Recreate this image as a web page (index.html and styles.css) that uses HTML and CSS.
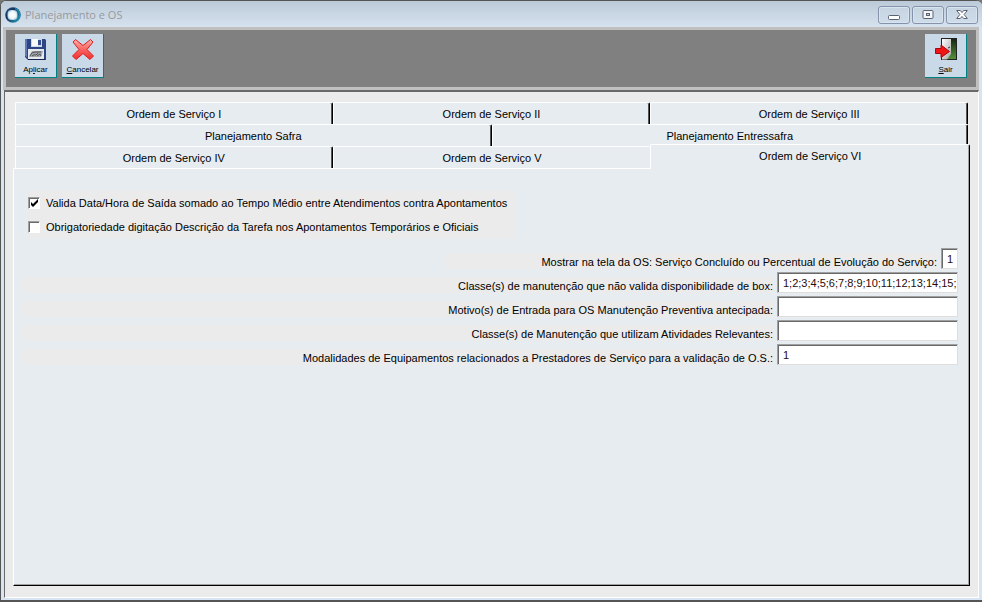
FILE: index.html
```html
<!DOCTYPE html>
<html lang="pt-BR">
<head>
  <meta charset="UTF-8">
  <meta name="viewport" content="width=device-width, initial-scale=1.0">
  <title>Planejamento e OS</title>
  <link rel="stylesheet" href="styles.css">
</head>
<body>
  <div class="window">

    <!-- Barra de título -->
    <header class="titlebar">
      <svg class="app-icon" viewBox="0 0 16 16" aria-hidden="true">
        <defs>
          <linearGradient id="ring" x1="0" y1="0" x2="1" y2="1">
            <stop offset="0" stop-color="#2a5a80"/>
            <stop offset="0.4" stop-color="#102c5c"/>
            <stop offset="1" stop-color="#2fb4cc"/>
          </linearGradient>
          <radialGradient id="core">
            <stop offset="0" stop-color="#ffffff"/>
            <stop offset="0.7" stop-color="#eef6fa"/>
            <stop offset="1" stop-color="#a9cddd"/>
          </radialGradient>
        </defs>
        <circle cx="8" cy="8" r="7.800" fill="url(#ring)"/>
        <path d="M10 1.500a6.500 6.500 0 0 1 4 9" fill="none" stroke="#1a8bab" stroke-width="1.500"/>
        <rect x="2.500" y="3" width="10" height="10" rx="4" fill="url(#core)"/>
      </svg>
      <h1>Planejamento e OS</h1>
      <div class="window-buttons">
        <button type="button" aria-label="Minimizar">
          <svg viewBox="0 0 12 12"><rect x=".5" y="6.500" width="11" height="4" rx="1" fill="#fff" stroke="#5c6273"/></svg>
        </button>
        <button type="button" aria-label="Maximizar">
          <svg viewBox="0 0 12 12"><rect x="1" y="1.500" width="10" height="8" rx="1" fill="#f3f5f8" stroke="#5c6273"/><rect x="4.500" y="4.500" width="3" height="2" fill="#c3d0dd" stroke="#5c6273"/></svg>
        </button>
        <button type="button" aria-label="Fechar">
          <svg viewBox="0 0 12 12"><path d="M.7 1.500h3.600L6 3.600l1.700-2.100h3.600L8.100 5.500l3.200 4H7.700L6 7.400 4.300 9.500H.7l3.200-4z" fill="#fff" stroke="#5c6273" stroke-linejoin="round"/></svg>
        </button>
      </div>
    </header>

    <!-- Barra de ferramentas -->
    <div class="toolbar">
      <button type="button" class="tool">
        <svg viewBox="0 0 24 24" aria-hidden="true">
          <path d="M1 2h20l1 1v20H4l-3-3z" fill="#2c4585"/>
          <path d="M1 2h2v18l-2-1z" fill="#6079b4"/>
          <path d="M7 2h11v8H7z" fill="#cfd9e8"/>
          <path d="M8 2h6v7H8z" fill="#f8fafc"/>
          <path d="M14 3h3v5h-3z" fill="#34508f"/>
          <path d="M4 12h16v10H4z" fill="#e6e9ec"/>
          <path d="M8 14h11l-2 6H5z" fill="#a3a6aa"/>
          <path d="M6 19q1-4 5-4h6M8 19q2-2 4-1l2-2M13 19l3-2 1 2" fill="none" stroke="#4c4f54"/>
          <path d="M4 22h17v1H4z" fill="#14244e"/>
        </svg>
        <span>Ap<u>l</u>icar</span>
      </button>
      <button type="button" class="tool">
        <svg viewBox="0 0 24 24" aria-hidden="true">
          <defs>
            <linearGradient id="cross" x1="0" y1="0" x2="0" y2="1">
              <stop offset="0" stop-color="#ffb0aa"/>
              <stop offset="0.5" stop-color="#f86461"/>
              <stop offset="1" stop-color="#f03030"/>
            </linearGradient>
          </defs>
          <path d="M4.500 2.500l7.500 6 7.500-6 2.500 2.500-6 7.500 6.500 6.500-3.500 3.500-7-6-7 6L1.500 19 8 12.500 2 5z" fill="url(#cross)" stroke="#dc1e1e" stroke-linejoin="round"/>
        </svg>
        <span><u>C</u>ancelar</span>
      </button>
      <button type="button" class="tool tool-exit">
        <svg viewBox="0 0 24 24" aria-hidden="true">
          <defs>
            <linearGradient id="outside" x1="0" y1="0" x2="0" y2="1">
              <stop offset="0" stop-color="#102510"/>
              <stop offset="1" stop-color="#57923c"/>
            </linearGradient>
            <linearGradient id="leaf" x1="0" y1="0" x2="1" y2="1">
              <stop offset="0" stop-color="#ffffff"/>
              <stop offset="1" stop-color="#a5a5a5"/>
            </linearGradient>
          </defs>
          <rect x="7.500" y="1.500" width="15" height="21" fill="url(#outside)" stroke="#222"/>
          <path d="M8 2h9v15l-4 5.500H8z" fill="url(#leaf)"/>
          <path d="M14 11l2-1" stroke="#333"/>
          <path d="M1.500 11.500H7V8l8.500 6.500L7 20.500v-4H1.500z" fill="#f01414" stroke="#a80808"/>
        </svg>
        <span><u>S</u>air</span>
      </button>
    </div>

    <!-- Área do formulário -->
    <main class="client">
      <div class="tabs" role="tablist">
        <div class="tab-row">
          <button type="button" class="tab" role="tab">Ordem de Serviço I</button>
          <button type="button" class="tab" role="tab">Ordem de Serviço II</button>
          <button type="button" class="tab" role="tab">Ordem de Serviço III</button>
        </div>
        <div class="tab-row">
          <button type="button" class="tab" role="tab">Planejamento Safra</button>
          <button type="button" class="tab" role="tab">Planejamento Entressafra</button>
        </div>
        <div class="tab-row">
          <button type="button" class="tab" role="tab">Ordem de Serviço IV</button>
          <button type="button" class="tab before-active" role="tab">Ordem de Serviço V</button>
          <button type="button" class="tab active" role="tab" aria-selected="true">Ordem de Serviço VI</button>
        </div>
      </div>

      <form class="panel" role="tabpanel">
        <div class="checks">
          <label><input type="checkbox" checked>Valida Data/Hora de Saída somado ao Tempo Médio entre Atendimentos contra Apontamentos</label>
          <label><input type="checkbox">Obrigatoriedade digitação Descrição da Tarefa nos Apontamentos Temporários e Oficiais</label>
        </div>

        <div class="fields">
          <div class="field field-short">
            <label for="mostrar">Mostrar na tela da OS: Serviço Concluído ou Percentual de Evolução do Serviço:</label>
            <input type="text" id="mostrar" value="1">
          </div>
          <div class="field">
            <label for="classe-box">Classe(s) de manutenção que não valida disponibilidade de box:</label>
            <input type="text" id="classe-box" value="1;2;3;4;5;6;7;8;9;10;11;12;13;14;15;16;17;18">
          </div>
          <div class="field">
            <label for="motivo">Motivo(s) de Entrada para OS Manutenção Preventiva antecipada:</label>
            <input type="text" id="motivo">
          </div>
          <div class="field">
            <label for="classe-ativ">Classe(s) de Manutenção que utilizam Atividades Relevantes:</label>
            <input type="text" id="classe-ativ">
          </div>
          <div class="field">
            <label for="modalidades">Modalidades de Equipamentos relacionados a Prestadores de Serviço para a validação de O.S.:</label>
            <input type="text" id="modalidades" value="1">
          </div>
        </div>
      </form>
    </main>
  </div>
</body>
</html>
```

FILE: styles.css
```css
* {
  box-sizing: border-box;
  margin: 0;
  padding: 0;
}

:root {
  --face: #e7ecf0;
  --grey: #ebebeb;
  --frame: #d8e4f1;
  --silver: #c0c0c0;
  --tool: #c9d9e8;
}

body {
  height: 100vh;
  background: #777;
  color: #000;
  font: 11px/14px "Liberation Sans", Arial, sans-serif;
  overflow: hidden;
}

button,
input {
  font: inherit;
  color: inherit;
}

.window {
  height: 100vh;
  display: flex;
  flex-direction: column;
  padding: 0 3px 2px 2px;
  background: var(--frame);
  border: 1px solid #555;
  border-bottom-width: 2px;
  border-right: 0;
  border-radius: 6px 6px 0 0;
}

/* Barra de título */
.titlebar {
  flex: none;
  height: 26px;
  display: flex;
  align-items: center;
  gap: 4px;
  margin: 0 -3px 0 -2px;
  padding: 2px 4px 0 4px;
  border-radius: 5px 5px 0 0;
  background: linear-gradient(#bccad8, #d6e2ee);
}

.app-icon {
  width: 16px;
  height: 16px;
}

.titlebar h1 {
  font: 11px/16px "Open Sans", "Noto Sans", sans-serif;
  color: #969a9f;
}

.window-buttons {
  display: flex;
  gap: 2px;
  margin-left: auto;
}

.window-buttons button {
  width: 32px;
  height: 18px;
  display: flex;
  align-items: center;
  justify-content: center;
  border: 1px solid #8492ab;
  border-radius: 3px;
  background: linear-gradient(#c6d3e0, #cfdce9);
  box-shadow: inset 0 0 0 1px #d9e4ef;
}

.window-buttons svg {
  width: 12px;
  height: 12px;
}

/* Barra de ferramentas */
.toolbar {
  flex: none;
  height: 63px;
  display: flex;
  align-items: flex-start;
  gap: 5px;
  padding: 4px 9px;
  background: #808080;
  border: 3px solid var(--silver);
}

.tool {
  width: 42px;
  height: 44px;
  display: flex;
  flex-direction: column;
  align-items: center;
  gap: 3px;
  padding: 3px 0 0;
  border: 0;
  border-right: 1px solid #008080;
  border-bottom: 1px solid #008080;
  background: var(--tool);
  font-size: 8px;
  line-height: 12px;
}

.tool svg {
  width: 24px;
  height: 24px;
}

.tool-exit {
  margin-left: auto;
}

/* Área do formulário */
.client {
  flex: 1;
  display: flex;
  flex-direction: column;
  margin-left: 1px;
  padding: 10px 8px 11px 8px;
  background: var(--grey);
  border: 1px solid #fff;
  border-top: 2px solid #696969;
  border-left: 1px solid #696969;
}

.tabs {
  padding: 0 2px;
}

.tab-row {
  display: grid;
  grid-auto-flow: column;
  grid-auto-columns: 1fr;
}

.tab {
  height: 22px;
  padding-top: 1px;
  border: 1px solid #fff;
  border-right-color: #000;
  border-bottom: 0;
  border-radius: 2px 2px 0 0;
  background: var(--face);
  box-shadow: inset -1px 0 0 #555;
}

.tab.before-active {
  border-right: 0;
  box-shadow: none;
}

/* A aba ativa avança sobre a fileira de cima e a borda do painel */
.tab.active {
  position: relative;
  height: 25px;
  margin: -2px -2px -1px 0;
  padding-bottom: 4px;
  box-shadow: inset -1px 0 0 #a0a0a0;
}

.panel {
  flex: 1;
  padding: 22px 11px 0 8px;
  background: var(--face);
  border: 1px solid #fff;
  border-right-color: #000;
  border-bottom-color: #000;
  box-shadow: inset -1px -1px 0 #a0a0a0;
}

.checks {
  width: fit-content;
  margin-left: 6px;
  padding-right: 9px;
  background: var(--grey);
}

.checks label {
  display: flex;
  align-items: center;
  gap: 6px;
  height: 24px;
}

.checks input {
  appearance: none;
  width: 12px;
  height: 12px;
  background: #fff;
  border: 1px solid #fff;
  border-top-color: #a0a0a0;
  border-left-color: #a0a0a0;
  box-shadow: inset 1px 1px 0 #696969;
}

.checks input:checked {
  background: #fff url("data:image/svg+xml,%3Csvg xmlns='http://www.w3.org/2000/svg' viewBox='0 0 10 10'%3E%3Cpath d='M2 4v3l2 2 5-5V1L4 6z'/%3E%3C/svg%3E") center / 10px 10px no-repeat;
}

.fields {
  display: flex;
  flex-direction: column;
  gap: 3px;
  padding-top: 9px;
}

.field {
  display: flex;
  align-items: flex-end;
  gap: 4px;
}

.field label {
  flex: 1;
  padding: 2px 0 0;
  background: var(--grey);
  text-align: right;
}

.field input {
  width: 181px;
  height: 21px;
  padding: 0 1px 0 5px;
  background: #fff;
  border: 1px solid #dedede;
  border-top-color: #a0a0a0;
  border-left-color: #a0a0a0;
  box-shadow: inset 1px 1px 0 #696969;
  color: #2a0a0a;
}

.field-short label {
  flex: none;
  margin-left: auto;
  padding-left: 96px;
}

.field-short input {
  width: 17px;
}
```
